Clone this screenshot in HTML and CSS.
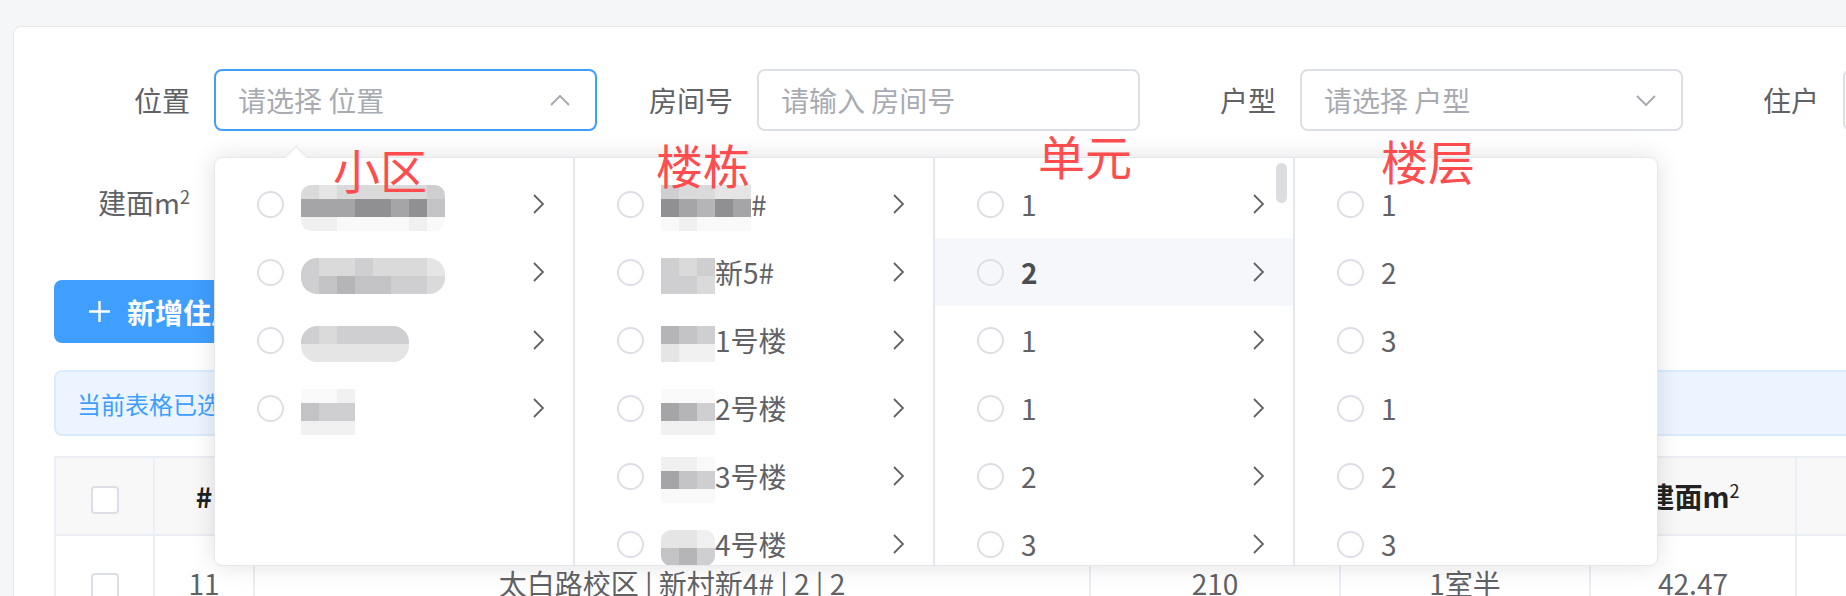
FILE: index.html
```html
<!DOCTYPE html>
<html lang="zh-CN">
<head>
  <meta charset="UTF-8">
  <title>住户管理</title>
  <link rel="stylesheet" href="styles.css">
</head>
<body>
  <div class="card">
    <div class="search-form">
      <div class="form-row">
        <div class="form-item">
          <label class="form-label">位置</label>
          <div class="input is-focus">
            <span class="placeholder">请选择 位置</span>
            <svg class="select-arrow" width="20" height="11" viewBox="0 0 20 11"><polyline points="1,10 10,1 19,10" fill="none" stroke="#a8abb2" stroke-width="2"/></svg>
          </div>
        </div>
        <div class="form-item">
          <label class="form-label">房间号</label>
          <div class="input"><span class="placeholder">请输入 房间号</span></div>
        </div>
        <div class="form-item">
          <label class="form-label">户型</label>
          <div class="input">
            <span class="placeholder">请选择 户型</span>
            <svg class="select-arrow" width="20" height="11" viewBox="0 0 20 11"><polyline points="1,1 10,10 19,1" fill="none" stroke="#a8abb2" stroke-width="2"/></svg>
          </div>
        </div>
        <div class="form-item">
          <label class="form-label">住户</label>
          <div class="input"><span class="placeholder">请输入 住户</span></div>
        </div>
      </div>
      <div class="form-row">
        <div class="form-item">
          <label class="form-label">建面m<sup>2</sup></label>
          <div class="input"><span class="placeholder">请输入 建面</span></div>
        </div>
      </div>
    </div>

    <div class="toolbar">
      <button class="btn btn-primary">
        <svg width="23" height="23" viewBox="0 0 23 23"><path d="M11.5 1v21M1 11.5h21" stroke="#fff" stroke-width="2.4"/></svg>
        新增住户
      </button>
    </div>

    <div class="alert">当前表格已选择 0 项 <span class="alert-link">清空</span></div>

    <table class="table">
      <colgroup>
        <col class="col-check">
        <col class="col-index">
        <col class="col-location">
        <col class="col-room">
        <col class="col-type">
        <col class="col-area">
        <col class="col-owner">
      </colgroup>
      <thead>
        <tr>
          <th><span class="checkbox"></span></th>
          <th>#</th>
          <th>位置</th>
          <th>房间号</th>
          <th>户型</th>
          <th>建面m<sup>2</sup></th>
          <th>住户</th>
        </tr>
      </thead>
      <tbody>
        <tr>
          <td><span class="checkbox"></span></td>
          <td>11</td>
          <td>太白路校区 | 新村新4# | 2 | 2</td>
          <td>210</td>
          <td>1室半</td>
          <td>42.47</td>
          <td>张三</td>
        </tr>
      </tbody>
    </table>
  </div>

  <!-- cascader dropdown -->
  <div class="cascader">
    <span class="popper-arrow"></span>

    <div class="menu">
      <div class="node">
        <span class="radio"></span>
        <span class="node-label">
          <span class="mosaic c8 r3 soft">
            <i class="s3"></i><i class="s2"></i><i class="s3"></i><i class="s3"></i><i class="s3"></i><i class="s3"></i><i class="s3"></i><i class="s4"></i>
            <i class="s7"></i><i class="s7"></i><i class="s7"></i><i class="s8"></i><i class="s8"></i><i class="s7"></i><i class="s8"></i><i class="s5"></i>
            <i class="s1"></i><i class="s1"></i><i class="s0"></i><i class="s0"></i><i class="s0"></i><i class="s0"></i><i class="s1"></i><i class="s0"></i>
          </span>
        </span>
        <svg class="chevron" width="11" height="20" viewBox="0 0 11 20"><polyline points="1,1 10,10 1,19" fill="none" stroke="#606266" stroke-width="1.8"/></svg>
      </div>
      <div class="node">
        <span class="radio"></span>
        <span class="node-label">
          <span class="mosaic c8 r2 pill">
            <i class="s4"></i><i class="s3"></i><i class="s3"></i><i class="s4"></i><i class="s3"></i><i class="s3"></i><i class="s3"></i><i class="s2"></i>
            <i class="s4"></i><i class="s5"></i><i class="s6"></i><i class="s5"></i><i class="s5"></i><i class="s4"></i><i class="s4"></i><i class="s3"></i>
          </span>
        </span>
        <svg class="chevron" width="11" height="20" viewBox="0 0 11 20"><polyline points="1,1 10,10 1,19" fill="none" stroke="#606266" stroke-width="1.8"/></svg>
      </div>
      <div class="node">
        <span class="radio"></span>
        <span class="node-label">
          <span class="mosaic c6 r2 pill">
            <i class="s4"></i><i class="s3"></i><i class="s4"></i><i class="s4"></i><i class="s4"></i><i class="s4"></i>
            <i class="s2"></i><i class="s2"></i><i class="s2"></i><i class="s2"></i><i class="s2"></i><i class="s2"></i>
          </span>
        </span>
        <svg class="chevron" width="11" height="20" viewBox="0 0 11 20"><polyline points="1,1 10,10 1,19" fill="none" stroke="#606266" stroke-width="1.8"/></svg>
      </div>
      <div class="node">
        <span class="radio"></span>
        <span class="node-label">
          <span class="mosaic c3 r3">
            <i class="s0"></i><i class="s0"></i><i class="s1"></i>
            <i class="s5"></i><i class="s4"></i><i class="s4"></i>
            <i class="s1"></i><i class="s1"></i><i class="s1"></i>
          </span>
        </span>
        <svg class="chevron" width="11" height="20" viewBox="0 0 11 20"><polyline points="1,1 10,10 1,19" fill="none" stroke="#606266" stroke-width="1.8"/></svg>
      </div>
    </div>

    <div class="menu">
      <div class="node">
        <span class="radio"></span>
        <span class="node-label">
          <span class="mosaic c5 r3">
            <i class="s4"></i><i class="s3"></i><i class="s3"></i><i class="s2"></i><i class="s2"></i>
            <i class="s8"></i><i class="s7"></i><i class="s6"></i><i class="s8"></i><i class="s7"></i>
            <i class="s0"></i><i class="s1"></i><i class="s0"></i><i class="s0"></i><i class="s0"></i>
          </span>#
        </span>
        <svg class="chevron" width="11" height="20" viewBox="0 0 11 20"><polyline points="1,1 10,10 1,19" fill="none" stroke="#606266" stroke-width="1.8"/></svg>
      </div>
      <div class="node">
        <span class="radio"></span>
        <span class="node-label">
          <span class="mosaic c3 r2">
            <i class="s4"></i><i class="s3"></i><i class="s4"></i>
            <i class="s4"></i><i class="s4"></i><i class="s3"></i>
          </span>新5#
        </span>
        <svg class="chevron" width="11" height="20" viewBox="0 0 11 20"><polyline points="1,1 10,10 1,19" fill="none" stroke="#606266" stroke-width="1.8"/></svg>
      </div>
      <div class="node">
        <span class="radio"></span>
        <span class="node-label">
          <span class="mosaic c3 r2">
            <i class="s6"></i><i class="s5"></i><i class="s4"></i>
            <i class="s2"></i><i class="s1"></i><i class="s1"></i>
          </span>1号楼
        </span>
        <svg class="chevron" width="11" height="20" viewBox="0 0 11 20"><polyline points="1,1 10,10 1,19" fill="none" stroke="#606266" stroke-width="1.8"/></svg>
      </div>
      <div class="node">
        <span class="radio"></span>
        <span class="node-label">
          <span class="mosaic c3 r3">
            <i class="s0"></i><i class="s0"></i><i class="s0"></i>
            <i class="s7"></i><i class="s6"></i><i class="s4"></i>
            <i class="s1"></i><i class="s1"></i><i class="s1"></i>
          </span>2号楼
        </span>
        <svg class="chevron" width="11" height="20" viewBox="0 0 11 20"><polyline points="1,1 10,10 1,19" fill="none" stroke="#606266" stroke-width="1.8"/></svg>
      </div>
      <div class="node">
        <span class="radio"></span>
        <span class="node-label">
          <span class="mosaic c3 r3">
            <i class="s1"></i><i class="s1"></i><i class="s0"></i>
            <i class="s7"></i><i class="s5"></i><i class="s4"></i>
            <i class="s0"></i><i class="s0"></i><i class="s0"></i>
          </span>3号楼
        </span>
        <svg class="chevron" width="11" height="20" viewBox="0 0 11 20"><polyline points="1,1 10,10 1,19" fill="none" stroke="#606266" stroke-width="1.8"/></svg>
      </div>
      <div class="node">
        <span class="radio"></span>
        <span class="node-label">
          <span class="mosaic c3 r2 soft">
            <i class="s2"></i><i class="s2"></i><i class="s1"></i>
            <i class="s5"></i><i class="s6"></i><i class="s4"></i>
          </span>4号楼
        </span>
        <svg class="chevron" width="11" height="20" viewBox="0 0 11 20"><polyline points="1,1 10,10 1,19" fill="none" stroke="#606266" stroke-width="1.8"/></svg>
      </div>
    </div>

    <div class="menu">
      <span class="scroll-thumb"></span>
      <div class="node">
        <span class="radio"></span>
        <span class="node-label">1</span>
        <svg class="chevron" width="11" height="20" viewBox="0 0 11 20"><polyline points="1,1 10,10 1,19" fill="none" stroke="#606266" stroke-width="1.8"/></svg>
      </div>
      <div class="node is-active">
        <span class="radio"></span>
        <span class="node-label">2</span>
        <svg class="chevron" width="11" height="20" viewBox="0 0 11 20"><polyline points="1,1 10,10 1,19" fill="none" stroke="#606266" stroke-width="1.8"/></svg>
      </div>
      <div class="node">
        <span class="radio"></span>
        <span class="node-label">1</span>
        <svg class="chevron" width="11" height="20" viewBox="0 0 11 20"><polyline points="1,1 10,10 1,19" fill="none" stroke="#606266" stroke-width="1.8"/></svg>
      </div>
      <div class="node">
        <span class="radio"></span>
        <span class="node-label">1</span>
        <svg class="chevron" width="11" height="20" viewBox="0 0 11 20"><polyline points="1,1 10,10 1,19" fill="none" stroke="#606266" stroke-width="1.8"/></svg>
      </div>
      <div class="node">
        <span class="radio"></span>
        <span class="node-label">2</span>
        <svg class="chevron" width="11" height="20" viewBox="0 0 11 20"><polyline points="1,1 10,10 1,19" fill="none" stroke="#606266" stroke-width="1.8"/></svg>
      </div>
      <div class="node">
        <span class="radio"></span>
        <span class="node-label">3</span>
        <svg class="chevron" width="11" height="20" viewBox="0 0 11 20"><polyline points="1,1 10,10 1,19" fill="none" stroke="#606266" stroke-width="1.8"/></svg>
      </div>
    </div>

    <div class="menu">
      <div class="node"><span class="radio"></span><span class="node-label">1</span></div>
      <div class="node"><span class="radio"></span><span class="node-label">2</span></div>
      <div class="node"><span class="radio"></span><span class="node-label">3</span></div>
      <div class="node"><span class="radio"></span><span class="node-label">1</span></div>
      <div class="node"><span class="radio"></span><span class="node-label">2</span></div>
      <div class="node"><span class="radio"></span><span class="node-label">3</span></div>
    </div>
  </div>

  <!-- red annotations over the dropdown -->
  <span class="note note-estate">小区</span>
  <span class="note note-building">楼栋</span>
  <span class="note note-unit">单元</span>
  <span class="note note-floor">楼层</span>
</body>
</html>
```

FILE: styles.css
```css
* {
  margin: 0;
  padding: 0;
  box-sizing: border-box;
  font-family: 'Noto Sans CJK SC', 'Noto Sans', sans-serif;
}

:root {
  --primary: #409eff;
  --text: #606266;
  --text-dark: #222;
  --placeholder: #a8abb2;
  --border: #dcdfe6;
  --border-light: #e4e7ed;
  --table-border: #ebeef5;
  --bg-page: #f5f6f8;
}

body {
  background: var(--bg-page);
  width: 1846px;
  height: 596px;
  overflow: hidden;
  position: relative;
}

.card {
  margin: 26px 0 0 13px;
  width: 2200px;
  background: #fff;
  border: 1px solid #e6e8eb;
  border-radius: 8px;
  padding: 42px 40px 40px 40px;
}

/* search form */
.form-row {
  display: flex;
  margin-bottom: 40px;
}

.form-item {
  display: flex;
  width: 543px;
  flex-shrink: 0;
}

.form-label {
  width: 160px;
  padding-right: 24px;
  text-align: right;
  font-size: 28px;
  line-height: 62px;
  color: var(--text);
  white-space: nowrap;
}

.form-label sup {
  font-size: 18px;
  line-height: 0;
}

.input {
  width: 383px;
  height: 62px;
  border: 2px solid var(--border);
  border-radius: 8px;
  display: flex;
  align-items: center;
  padding: 0 25px 0 22px;
  background: #fff;
}

.input.is-focus {
  border-color: var(--primary);
}

.placeholder {
  flex: 1;
  font-size: 28px;
  color: var(--placeholder);
}

.toolbar {
  margin-top: 47px;
}

.btn {
  height: 63px;
  padding: 0 34px;
  border: none;
  border-radius: 8px;
  font-size: 28px;
  font-weight: 700;
  display: inline-flex;
  align-items: center;
  gap: 16px;
  cursor: pointer;
}

.btn-primary {
  background: var(--primary);
  color: #fff;
}

.alert {
  margin-top: 27px;
  height: 66px;
  background: #ecf5ff;
  border: 2px solid #d9ecff;
  border-radius: 8px;
  padding: 0 21px;
  display: flex;
  align-items: center;
  font-size: 24px;
  color: var(--primary);
}

.alert-link {
  margin-left: 12px;
}

/* table */
.table {
  margin-top: 20px;
  border-collapse: collapse;
  table-layout: fixed;
  width: 1991px;
  border: 2px solid var(--table-border);
}

.col-check { width: 99px; }
.col-index { width: 100px; }
.col-location { width: 836px; }
.col-room { width: 250px; }
.col-type { width: 250px; }
.col-area { width: 206px; }
.col-owner { width: 250px; }

.table th,
.table td {
  border: 2px solid var(--table-border);
  text-align: center;
  font-size: 28px;
}

.table th {
  height: 78px;
  background: #f8f8f9;
  color: var(--text-dark);
  font-weight: 700;
}

.table th sup {
  font-size: 18px;
  font-weight: 400;
  line-height: 0;
}

.table td {
  height: 96px;
  color: var(--text);
}

.checkbox {
  display: inline-block;
  width: 28px;
  height: 28px;
  border: 2px solid var(--border);
  border-radius: 4px;
  background: #fff;
  vertical-align: middle;
}

/* cascader dropdown */
.cascader {
  position: absolute;
  left: 214px;
  top: 157px;
  display: flex;
  background: #fff;
  border: 1px solid var(--border-light);
  border-radius: 8px;
  box-shadow: 0 0 24px rgba(0, 0, 0, 0.12);
}

.popper-arrow {
  position: absolute;
  left: 73px;
  top: -9px;
  width: 16px;
  height: 16px;
  background: #fff;
  border-top: 1px solid var(--border-light);
  border-left: 1px solid var(--border-light);
  transform: rotate(45deg);
}

.menu {
  width: 360px;
  height: 407px;
  padding: 12px 0;
  border-right: 2px solid var(--border-light);
  overflow: hidden;
  position: relative;
}

.menu:last-child {
  width: 362px;
  border-right: none;
}

.scroll-thumb {
  position: absolute;
  right: 6px;
  top: 5px;
  width: 11px;
  height: 40px;
  border-radius: 6px;
  background: #dcdde0;
}

.node {
  height: 68px;
  display: flex;
  align-items: center;
  padding: 0 29px 0 42px;
  font-size: 28px;
  color: var(--text);
}

.node.is-active {
  background: #f5f7fa;
}

.node.is-active .node-label {
  font-weight: 700;
  color: #4b4d52;
}

.radio {
  width: 27px;
  height: 27px;
  border: 2px solid var(--border);
  border-radius: 50%;
  margin-right: 17px;
  flex-shrink: 0;
}

.node-label {
  flex: 1;
  display: flex;
  align-items: center;
  white-space: nowrap;
}

.chevron {
  flex-shrink: 0;
}

/* pixelated (blurred) text */
.mosaic {
  display: inline-grid;
  grid-auto-columns: 18px;
  overflow: hidden;
  margin-top: 8px;
}

.mosaic i { display: block; }

.mosaic.c3 { grid-template-columns: repeat(3, 18px); }
.mosaic.c5 { grid-template-columns: repeat(5, 18px); }
.mosaic.c6 { grid-template-columns: repeat(6, 18px); }
.mosaic.c8 { grid-template-columns: repeat(8, 18px); }
.mosaic.r2 { grid-template-rows: 18px 18px; }
.mosaic.r3 { grid-template-rows: 14px 18px 14px; }
.mosaic.pill { border-radius: 16px; }
.mosaic.soft { border-radius: 10px; }

.s0 { background: #f9f9fa; }
.s1 { background: #f0f0f1; }
.s2 { background: #e5e5e6; }
.s3 { background: #dadadb; }
.s4 { background: #cfcfd1; }
.s5 { background: #c3c3c5; }
.s6 { background: #b5b5b7; }
.s7 { background: #a5a5a7; }
.s8 { background: #909092; }

/* annotations */
.note {
  position: absolute;
  font-size: 47px;
  line-height: 1;
  color: #ff4d4f;
}

.note-estate { left: 333px; top: 145px; }
.note-building { left: 656px; top: 140px; }
.note-unit { left: 1038px; top: 131px; }
.note-floor { left: 1381px; top: 136px; }
```
